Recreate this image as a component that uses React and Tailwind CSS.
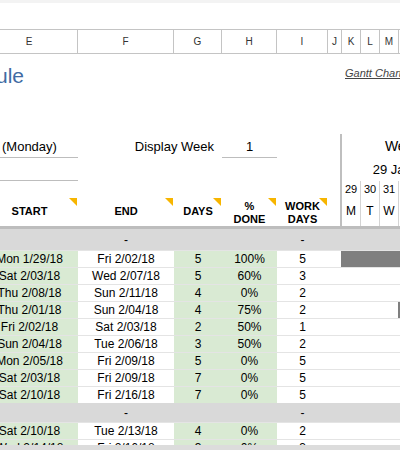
import React from "react";

const COLS =
  "grid grid-cols-[97px_96px_48px_55px_51px_14px_19px_19px_19px_19px_19px_19px_19px]";

const letters = ["E", "F", "G", "H", "I", "J", "K", "L", "M", "N", "O", "P", "Q"];
const dayNums = ["29", "30", "31", "1", "2", "3", "4"];
const dayLetters = ["M", "T", "W", "T", "F", "S", "S"];

const group1 = [
  { start: "Mon 1/29/18", end: "Fri 2/02/18", days: 5, pct: 100, work: 5, off: 0 },
  { start: "Sat 2/03/18", end: "Wed 2/07/18", days: 5, pct: 60, work: 3, off: 5 },
  { start: "Thu 2/08/18", end: "Sun 2/11/18", days: 4, pct: 0, work: 2, off: 10 },
  { start: "Thu 2/01/18", end: "Sun 2/04/18", days: 4, pct: 75, work: 2, off: 3 },
  { start: "Fri 2/02/18", end: "Sat 2/03/18", days: 2, pct: 50, work: 1, off: 4 },
  { start: "Sun 2/04/18", end: "Tue 2/06/18", days: 3, pct: 50, work: 2, off: 6 },
  { start: "Mon 2/05/18", end: "Fri 2/09/18", days: 5, pct: 0, work: 5, off: 7 },
  { start: "Sat 2/03/18", end: "Fri 2/09/18", days: 7, pct: 0, work: 5, off: 5 },
  { start: "Sat 2/10/18", end: "Fri 2/16/18", days: 7, pct: 0, work: 5, off: 12 },
];

const group2 = [
  { start: "Sat 2/10/18", end: "Tue 2/13/18", days: 4, pct: 0, work: 2, off: 12 },
  { start: "Wed 2/14/18", end: "Fri 2/16/18", days: 3, pct: 0, work: 3, off: 16 },
];

function Flag() {
  return (
    <svg className="absolute top-[1px] right-[1px]" width="8" height="8" viewBox="0 0 8 8">
      <polygon points="0,0 8,0 8,8" fill="#f7b500" />
    </svg>
  );
}

function TaskRow({ t }) {
  const done = t.days * 19 * (t.pct / 100);
  const rest = t.days * 19 - done;
  return (
    <div className={`${COLS} h-[17px] border-t border-[#e4e4e4] text-[12px] leading-none text-black`}>
      <div className="bg-[#d9ead3] flex items-center justify-center">{t.start}</div>
      <div className="flex items-center justify-center">{t.end}</div>
      <div className="bg-[#d9ead3] flex items-center justify-center">{t.days}</div>
      <div className="bg-[#d9ead3] flex items-center justify-center">{t.pct}%</div>
      <div className="flex items-center justify-center">{t.work}</div>
      <div className="col-span-8 flex overflow-hidden">
        <div className="shrink-0" style={{ width: 13 + t.off * 19 }} />
        <div className="shrink-0 bg-[#7f7f7f]" style={{ width: done }} />
        <div className="shrink-0 bg-[#c0c0c0]" style={{ width: rest }} />
      </div>
    </div>
  );
}

function GroupRow({ h }) {
  return (
    <div className={`${COLS} ${h} bg-[#d9d9d9] text-[12px] text-black`}>
      <div />
      <div className="flex items-center justify-center">-</div>
      <div />
      <div />
      <div className="flex items-center justify-center">-</div>
    </div>
  );
}

export default function App() {
  return (
    <div className="w-[400px] h-[450px] overflow-hidden bg-white flex flex-col font-['Liberation_Sans',Arial,sans-serif]">
      <div className="h-[3px] bg-[#f3f3f3] shrink-0" />
      <div className="h-[26px] shrink-0" />

      <div className="flex-1 overflow-hidden">
        <div className="w-[494px] -ml-[19px]">
          {/* column letters */}
          <div className={`${COLS} h-[25px] border-y border-[#c4c4c4] text-[10px] text-[#333]`}>
            {letters.map((l) => (
              <div key={l} className="border-r border-[#c4c4c4] flex items-center justify-center">
                {l}
              </div>
            ))}
          </div>

          {/* title */}
          <div className={`${COLS} h-[44px] items-center`}>
            <div className="col-span-6">
              <div className="w-[43px] flex justify-end whitespace-nowrap text-[21px] text-[#416ba3]">
                Project Schedule
              </div>
            </div>
            <div className="col-span-7 pl-[3px] whitespace-nowrap text-[11px] italic underline text-[#444] -mt-[5px]">
              Gantt Chart Template © 2006-2018 by Vertex42.com
            </div>
          </div>

          <div className="h-[36px]" />

          {/* project start / display week */}
          <div className={`${COLS} h-[24px] text-[13px] text-black`}>
            <div className="border-b border-[#bdbdbd] flex items-center pl-[21px] pt-[2px]">(Monday)</div>
            <div className="col-span-2 flex items-center justify-end pr-[8px] pt-[2px]">Display Week</div>
            <div className="border-b border-[#bdbdbd] flex items-center justify-center pt-[2px]">1</div>
            <div />
            <div className="border-r-2 border-[#bfbfbf]" />
            <div className="col-span-7 flex items-center justify-center text-[14px]">Week 1</div>
          </div>
          <div className={`${COLS} h-[23px] text-[13px] text-black`}>
            <div className="border-b border-[#bdbdbd]" />
            <div />
            <div />
            <div />
            <div />
            <div className="border-r-2 border-[#bfbfbf]" />
            <div className="col-span-7 flex items-center justify-center">29 Jan 2018</div>
          </div>
          <div className={`${COLS} h-[16px] text-[11px] text-black`}>
            <div />
            <div />
            <div />
            <div />
            <div />
            <div className="border-r-2 border-[#bfbfbf]" />
            {dayNums.map((d) => (
              <div key={d} className="border-r border-[#d4d4d4] flex items-center justify-center">
                {d}
              </div>
            ))}
          </div>

          {/* column headings */}
          <div className={`${COLS} h-[29px] text-[11px] font-bold leading-[13px] text-black text-center`}>
            <div className="relative flex items-center justify-center">
              START
              <Flag />
            </div>
            <div className="relative flex items-center justify-center">
              END
              <Flag />
            </div>
            <div className="relative flex items-center justify-center">
              DAYS
              <Flag />
            </div>
            <div className="relative flex items-center justify-center pt-[2px]">
              %<br />DONE
              <Flag />
            </div>
            <div className="relative flex items-center justify-center pt-[2px]">
              WORK<br />DAYS
              <Flag />
            </div>
            <div className="border-r-2 border-[#bfbfbf]" />
            {dayLetters.map((d, i) => (
              <div
                key={i}
                className="border-r border-[#d4d4d4] flex items-center justify-center text-[12px] font-normal"
              >
                {d}
              </div>
            ))}
          </div>
          <div className="h-[3px] bg-[#bdbdbd]" />

          <GroupRow h="h-[21px]" />
          {group1.map((t, i) => (
            <TaskRow key={i} t={t} />
          ))}
          <GroupRow h="h-[19px]" />
          {group2.map((t, i) => (
            <TaskRow key={i} t={t} />
          ))}
        </div>
      </div>

      <div className="h-[5px] bg-[#dcdcdc] shrink-0" />
    </div>
  );
}
